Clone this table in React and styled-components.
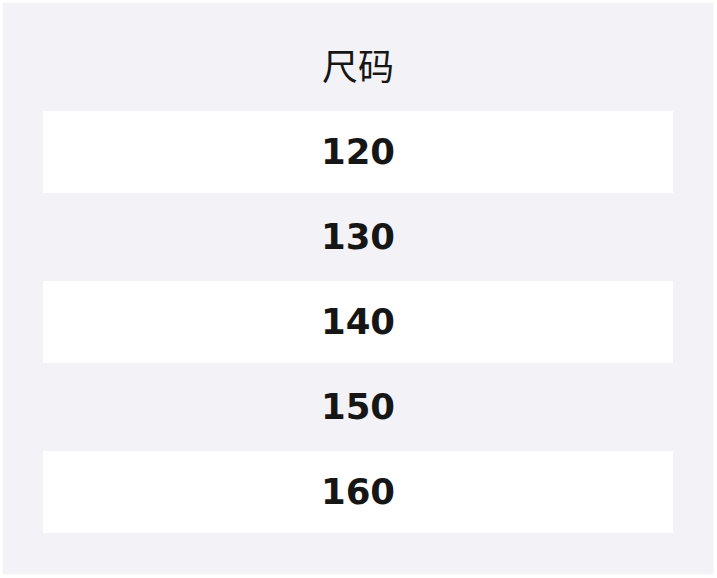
import React from "react";
import styled, { createGlobalStyle } from "styled-components";

const Global = createGlobalStyle`
  html, body { margin: 0; padding: 0; background: #ffffff; }
  body { font-family: "DejaVu Sans", "Noto Sans CJK SC", sans-serif; }
`;

const Page = styled.div`
  padding: 3px;
  width: 710px;
`;

const Panel = styled.div`
  background: #f3f3f7;
  box-shadow: 0 0 2px rgba(0, 0, 0, 0.06);
  padding: 36px 40px 41px;
  display: flex;
  flex-direction: column;
`;

const Title = styled.div`
  font-family: "Noto Sans CJK SC", "DejaVu Sans", sans-serif;
  font-size: 36px;
  line-height: 50px;
  color: #161616;
  text-align: center;
  margin-bottom: 22px;
`;

const List = styled.div`
  display: flex;
  flex-direction: column;
  gap: 3px;
`;

const Row = styled.div`
  height: 82px;
  box-sizing: border-box;
  padding-bottom: 2px;
  display: flex;
  align-items: center;
  justify-content: center;
  background: ${(p) => (p.$striped ? "#ffffff" : "transparent")};
  font-family: "DejaVu Sans", sans-serif;
  font-weight: bold;
  font-size: 35.5px;
  color: #161616;
`;

const sizes = ["120", "130", "140", "150", "160"];

export default function App() {
  return (
    <>
      <Global />
      <Page>
        <Panel>
          <Title>尺码</Title>
          <List>
            {sizes.map((s, i) => (
              <Row key={s} $striped={i % 2 === 0}>
                {s}
              </Row>
            ))}
          </List>
        </Panel>
      </Page>
    </>
  );
}
